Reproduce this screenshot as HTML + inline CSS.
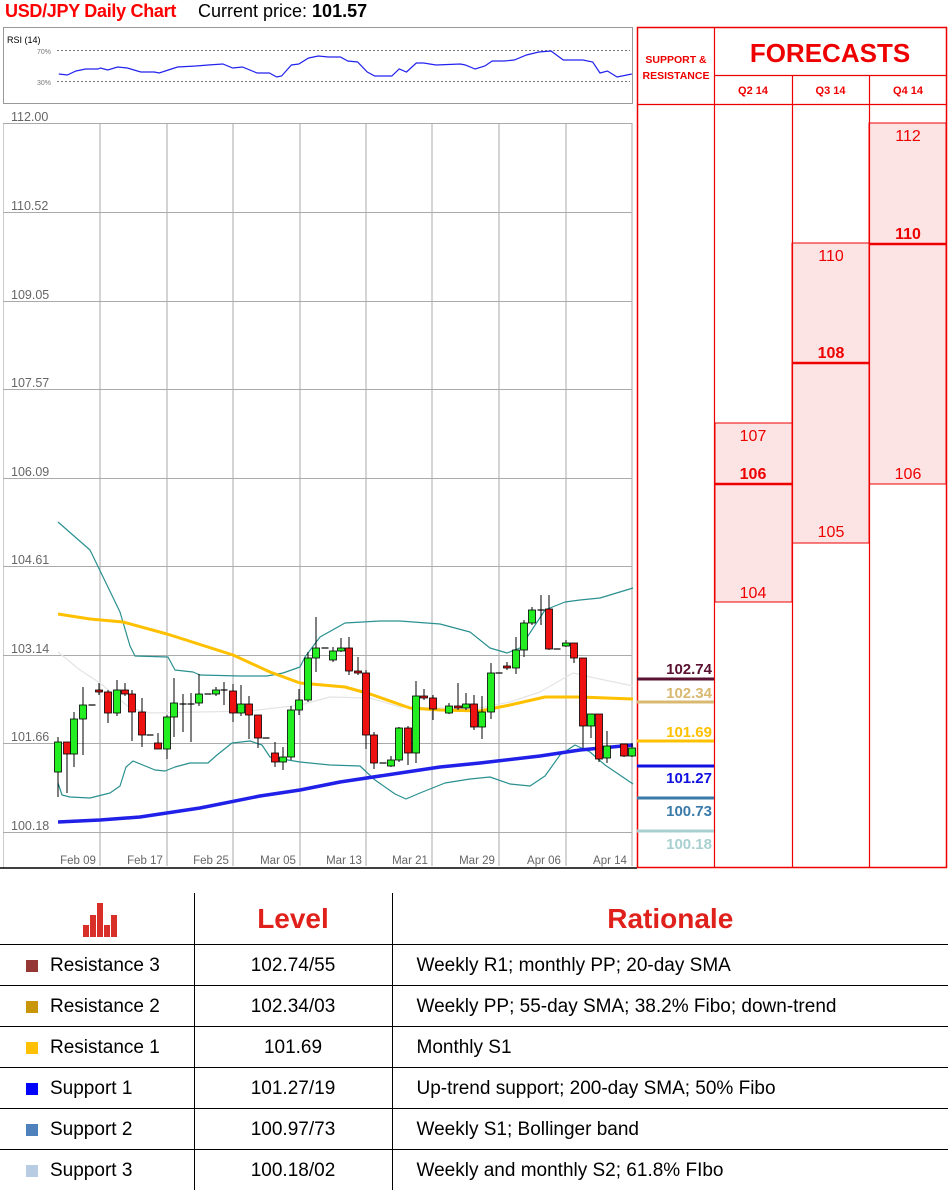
<!DOCTYPE html>
<html><head><meta charset="utf-8">
<style>
*{margin:0;padding:0;box-sizing:border-box}
body{width:951px;height:1193px;background:#fff;font-family:"Liberation Sans",sans-serif;position:relative;overflow:hidden}
.abs{position:absolute}
.t{position:absolute;white-space:nowrap}
table{position:absolute;left:0;top:893px;border-collapse:collapse;width:948px}
td{font-size:19px;color:#000;height:41px;border-top:1.5px solid #000;padding:0;padding-top:2px}
td.c1{width:194px;border-right:1.5px solid #000;padding-left:26px}
td.c2{width:198px;border-right:1.5px solid #000;text-align:center}
td.c3{padding-left:24px}
.sq{display:inline-block;width:12px;height:12px;margin-right:12px;vertical-align:-1px}
tr.h td{height:51px;border-top:none;font-weight:bold;font-size:28px;color:#e0201a}
</style></head><body>
<div class="t" style="left:5px;top:1px;font-size:18px;font-weight:bold;color:#f00;letter-spacing:-0.3px">USD/JPY Daily Chart</div>
<div class="t" style="left:198px;top:1px;font-size:18px;color:#000">Current price: <b>101.57</b></div>

<svg class="abs" style="left:0;top:0" width="951" height="893" id="sv">
<rect x="3.5" y="27.5" width="629" height="76" fill="#fff" stroke="#999"/>
<text x="7" y="43" font-size="9" font-family="Liberation Sans" fill="#000">RSI (14)</text>
<text x="37" y="54" font-size="7" fill="#777" font-family="Liberation Sans">70%</text>
<text x="37" y="85" font-size="7" fill="#777" font-family="Liberation Sans">30%</text>
<line x1="57" y1="50.5" x2="630" y2="50.5" stroke="#777" stroke-dasharray="2,2"/>
<line x1="57" y1="81.5" x2="630" y2="81.5" stroke="#777" stroke-dasharray="2,2"/>
<g id="grid"></g>
<g id="lines"></g>
<g id="cand"></g>
<line x1="0" y1="868" x2="637" y2="868" stroke="#000" stroke-width="1.5"/>
<g id="fc"></g>
</svg>

<table>
<tr class="h"><td class="c1" style="padding-left:83px"><svg width="36" height="36" style="vertical-align:middle"><rect x="0" y="24" width="6" height="12" fill="#d83028"/><rect x="7" y="14" width="6" height="22" fill="#d83028"/><rect x="14" y="2" width="6" height="34" fill="#d83028"/><rect x="21" y="24" width="6" height="12" fill="#d83028"/><rect x="28" y="14" width="6" height="22" fill="#d83028"/></svg></td><td class="c2">Level</td><td class="c3" style="text-align:center;padding-left:0">Rationale</td></tr>
<tr><td class="c1"><span class="sq" style="background:#953735"></span>Resistance 3</td><td class="c2">102.74/55</td><td class="c3">Weekly R1; monthly PP; 20-day SMA</td></tr>
<tr><td class="c1"><span class="sq" style="background:#c9960a"></span>Resistance 2</td><td class="c2">102.34/03</td><td class="c3">Weekly PP; 55-day SMA; 38.2% Fibo; down-trend</td></tr>
<tr><td class="c1"><span class="sq" style="background:#ffc000"></span>Resistance 1</td><td class="c2">101.69</td><td class="c3">Monthly S1</td></tr>
<tr><td class="c1"><span class="sq" style="background:#0000ff"></span>Support 1</td><td class="c2">101.27/19</td><td class="c3">Up-trend support; 200-day SMA; 50% Fibo</td></tr>
<tr><td class="c1"><span class="sq" style="background:#4f81bd"></span>Support 2</td><td class="c2">100.97/73</td><td class="c3">Weekly S1; Bollinger band</td></tr>
<tr><td class="c1"><span class="sq" style="background:#b8cce4"></span>Support 3</td><td class="c2">100.18/02</td><td class="c3">Weekly and monthly S2; 61.8% FIbo</td></tr>
</table>

<script>
var NS="http://www.w3.org/2000/svg";
function el(p,t,a,txt){var e=document.createElementNS(NS,t);for(var k in a)e.setAttribute(k,a[k]);if(txt!==undefined)e.textContent=txt;document.getElementById(p).appendChild(e);return e;}
var gy=[123,212,301,389,478,566,655,743,832];
var gl=["112.00","110.52","109.05","107.57","106.09","104.61","103.14","101.66","100.18"];
el("grid","line",{x1:3.5,y1:123,x2:3.5,y2:868,stroke:"#ccc"});
var vx=[100,167,233,300,366,432,499,566,632];
vx.forEach(function(x){el("grid","line",{x1:x,y1:123,x2:x,y2:866,stroke:"#aaa"});});
gy.forEach(function(y,i){el("grid","line",{x1:3,y1:y+.5,x2:632,y2:y+.5,stroke:"#aaa"});
 el("grid","text",{x:11,y:y-2,"font-size":12.5,fill:"#666","font-family":"Liberation Sans"},gl[i]);});
var dl=["Feb 09","Feb 17","Feb 25","Mar 05","Mar 13","Mar 21","Mar 29","Apr 06","Apr 14"];
dl.forEach(function(d,i){el("grid","text",{x:vx[i]-22,y:864,"font-size":11.5,fill:"#666","text-anchor":"middle","font-family":"Liberation Sans"},d);});
var r=[[48,74],[55,75],[62,71],[70,69],[80,69],[82,68],[88,70],[96,67],[104,68],[115,72],[126,72],[130,73],[140,69],[145,67],[160,66],[170,65],[182,64],[190,68],[198,67],[210,73],[220,73],[226,77],[230,76],[238,65],[244,64],[252,58],[260,56],[268,57],[278,57],[284,61],[292,62],[300,72],[306,76],[320,76],[326,69],[332,72],[340,63],[346,63],[356,65],[376,64],[380,65],[388,69],[396,66],[402,61],[412,61],[420,60],[430,55],[440,52],[450,51],[460,60],[476,60],[484,62],[490,73],[496,71],[504,77],[512,75],[516,74]];
el("grid","polyline",{points:r.map(function(p){return (p[0]*1.2245).toFixed(1)+","+p[1]}).join(" "),fill:"none",stroke:"#2222ee","stroke-width":1.2});
function pl(pts,c,w){el("lines","polyline",{points:pts.map(function(p){return p.join(",")}).join(" "),fill:"none",stroke:c,"stroke-width":w,"stroke-linejoin":"round"});}
pl([[58,652],[80,670],[100,683],[130,708],[150,713],[200,712],[250,711],[300,705],[330,697],[370,698],[400,707],[440,708],[480,708],[510,702],[540,692],[573,673],[590,677],[633,686]],"#e4e4e4",1.2);
pl([[58,522],[90,550],[120,612],[130,646],[135,656],[168,657],[175,670],[193,672],[200,675],[240,676],[267,676],[283,673],[300,667],[305,657],[320,637],[345,623],[380,621],[400,621],[440,624],[470,632],[490,648],[507,653],[520,648],[545,610],[565,602],[580,600],[600,598],[633,588]],"#2a9090",1.2);
pl([[58,783],[62,795],[70,797],[90,798],[110,793],[120,786],[126,767],[133,761],[155,770],[165,771],[175,767],[190,763],[208,763],[217,755],[232,743],[250,741],[262,745],[270,757],[300,762],[330,765],[360,766],[375,780],[395,794],[406,799],[420,793],[445,783],[470,779],[490,777],[510,784],[530,786],[545,776],[560,755],[575,745],[590,752],[605,765],[633,784]],"#2a9090",1.2);
pl([[58,614],[90,619],[123,622],[167,634],[233,655],[270,672],[300,683],[345,687],[370,694],[410,708],[440,710],[480,711],[510,705],[545,697],[580,697],[633,699]],"#ffc000",3);
pl([[58,822],[100,820],[140,817],[200,808],[260,796],[300,790],[340,782],[400,773],[440,767],[480,763],[540,756],[580,750],[633,745]],"#2020e8",3.5);
var C=[
[58,742,772,737,797,"g"],[67,742,754,742,793,"r"],[74,719,754,712,767,"g"],[83,705,719,687,755,"g"],[92,705,705,705,705,"d"],[99,690,692,683,695,"r"],[108,692,713,690,723,"r"],[117,690,713,680,716,"g"],[125,690,694,683,696,"r"],[132,694,712,690,741,"r"],[142,712,735,698,747,"r"],[150,735,735,735,735,"d"],[158,743,749,733,749,"r"],[167,717,749,715,759,"g"],[174,703,717,678,737,"g"],[183,704,704,694,732,"d"],[191,704,704,693,742,"d"],[199,694,703,674,706,"g"],[208,694,694,694,694,"d"],[216,690,694,687,696,"g"],[224,690,690,682,705,"d"],[233,691,713,684,722,"r"],[241,704,713,685,716,"g"],[249,704,715,696,739,"r"],[258,715,738,715,748,"r"],[266,738,738,738,738,"d"],[275,753,762,742,767,"r"],[283,757,762,747,770,"g"],[291,710,757,706,760,"g"],[299,700,710,689,715,"g"],[308,658,700,652,702,"g"],[316,648,658,617,672,"g"],
[325,648,648,648,648,"d"],[333,651,660,647,662,"g"],[341,648,651,638,652,"g"],[349,648,671,637,675,"r"],[358,671,673,657,675,"r"],[366,673,735,670,749,"r"],[374,735,763,732,769,"r"],[383,763,763,763,763,"d"],[391,760,766,756,767,"g"],[399,728,760,727,762,"g"],[408,728,753,726,765,"r"],[416,696,753,681,763,"g"],[424,696,698,689,700,"r"],[433,698,709,695,720,"r"],[449,706,713,703,714,"g"],[458,706,708,683,710,"r"],[466,704,708,693,710,"g"],[474,704,727,695,730,"r"],[482,712,727,696,739,"g"],[491,673,712,663,719,"g"],[499,673,673,673,673,"d"],[507,666,668,662,670,"r"],[516,650,668,637,674,"g"],[524,623,650,620,657,"g"],[532,610,623,607,625,"g"],[541,610,610,595,625,"d"],[549,609,649,595,650,"r"],[557,649,649,649,649,"d"],[566,643,646,640,647,"g"],[574,643,658,643,663,"r"],[583,658,726,658,748,"r"],[591,714,726,714,738,"g"],[599,714,759,714,762,"r"],[607,746,758,731,763,"g"],[624,744,756,744,757,"r"],[632,748,756,743,757,"g"]];
C.forEach(function(c){var x=c[0];
 el("cand","line",{x1:x,y1:c[3],x2:x,y2:c[4],stroke:"#000","stroke-width":1});
 if(c[5]=="d"){el("cand","line",{x1:x-3.5,y1:c[1],x2:x+3.5,y2:c[1],stroke:"#000","stroke-width":1.2});}
 else el("cand","rect",{x:x-3.5,y:c[1],width:7,height:Math.max(2,c[2]-c[1]),fill:c[5]=="g"?"#22ee22":"#ee1111",stroke:"#000","stroke-width":0.8});
});
var R="#e00";
function box(x,y1,y2){el("fc","rect",{x:x,y:y1,width:77,height:y2-y1,fill:"#fde4e4",stroke:R,"stroke-width":1});}
box(715,423,602);box(792,243,543);box(869,123,484);
el("fc","rect",{x:637.5,y:27.5,width:309,height:840,fill:"none",stroke:R,"stroke-width":1.5});
[714.5,792.5,869.5].forEach(function(x){el("fc","line",{x1:x,y1:x==714.5?27:75,x2:x,y2:868,stroke:R,"stroke-width":1.2});});
el("fc","line",{x1:714,y1:75.5,x2:947,y2:75.5,stroke:R,"stroke-width":1.2});
el("fc","line",{x1:637,y1:104.5,x2:947,y2:104.5,stroke:R,"stroke-width":1.2});
el("fc","text",{x:676,y:63,"font-size":10.5,"font-weight":"bold",fill:R,"text-anchor":"middle","font-family":"Liberation Sans"},"SUPPORT &");
el("fc","text",{x:676,y:79,"font-size":10.5,"font-weight":"bold",fill:R,"text-anchor":"middle","font-family":"Liberation Sans"},"RESISTANCE");
el("fc","text",{x:830,y:62,"font-size":26,"font-weight":"bold",fill:R,"text-anchor":"middle","font-family":"Liberation Sans"},"FORECASTS");
["Q2 14","Q3 14","Q4 14"].forEach(function(q,i){el("fc","text",{x:753+i*77.5,y:94,"font-size":11,"font-weight":"bold",fill:R,"text-anchor":"middle","font-family":"Liberation Sans"},q);});
function ft(x,y,t,b){el("fc","text",{x:x,y:y,"font-size":16,"font-weight":b?"bold":"normal",fill:R,"text-anchor":"middle","font-family":"Liberation Sans"},t);}
ft(753,441,"107");ft(753,479,"106",1);ft(753,598,"104");
el("fc","line",{x1:715,y1:484,x2:792,y2:484,stroke:R,"stroke-width":2.5});
ft(831,261,"110");ft(831,358,"108",1);ft(831,537,"105");
el("fc","line",{x1:792,y1:363,x2:869,y2:363,stroke:R,"stroke-width":2.5});
ft(908,141,"112");ft(908,239,"110",1);ft(908,479,"106");
el("fc","line",{x1:869,y1:244,x2:947,y2:244,stroke:R,"stroke-width":2.5});
var S=[["102.74","#5a1030",674,679],["102.34","#d9b870",698,702],["101.69","#ffc000",737,741],["101.27","#1010e0",783,766],["100.73","#3a7aa8",816,798],["100.18","#a8d0d0",849,831]];
S.forEach(function(s){el("fc","line",{x1:637,y1:s[3],x2:714,y2:s[3],stroke:s[1],"stroke-width":3});
 el("fc","text",{x:712,y:s[2],"font-size":15,"font-weight":"bold",fill:s[1],"text-anchor":"end","font-family":"Liberation Sans"},s[0]);});
</script>
</body></html>
